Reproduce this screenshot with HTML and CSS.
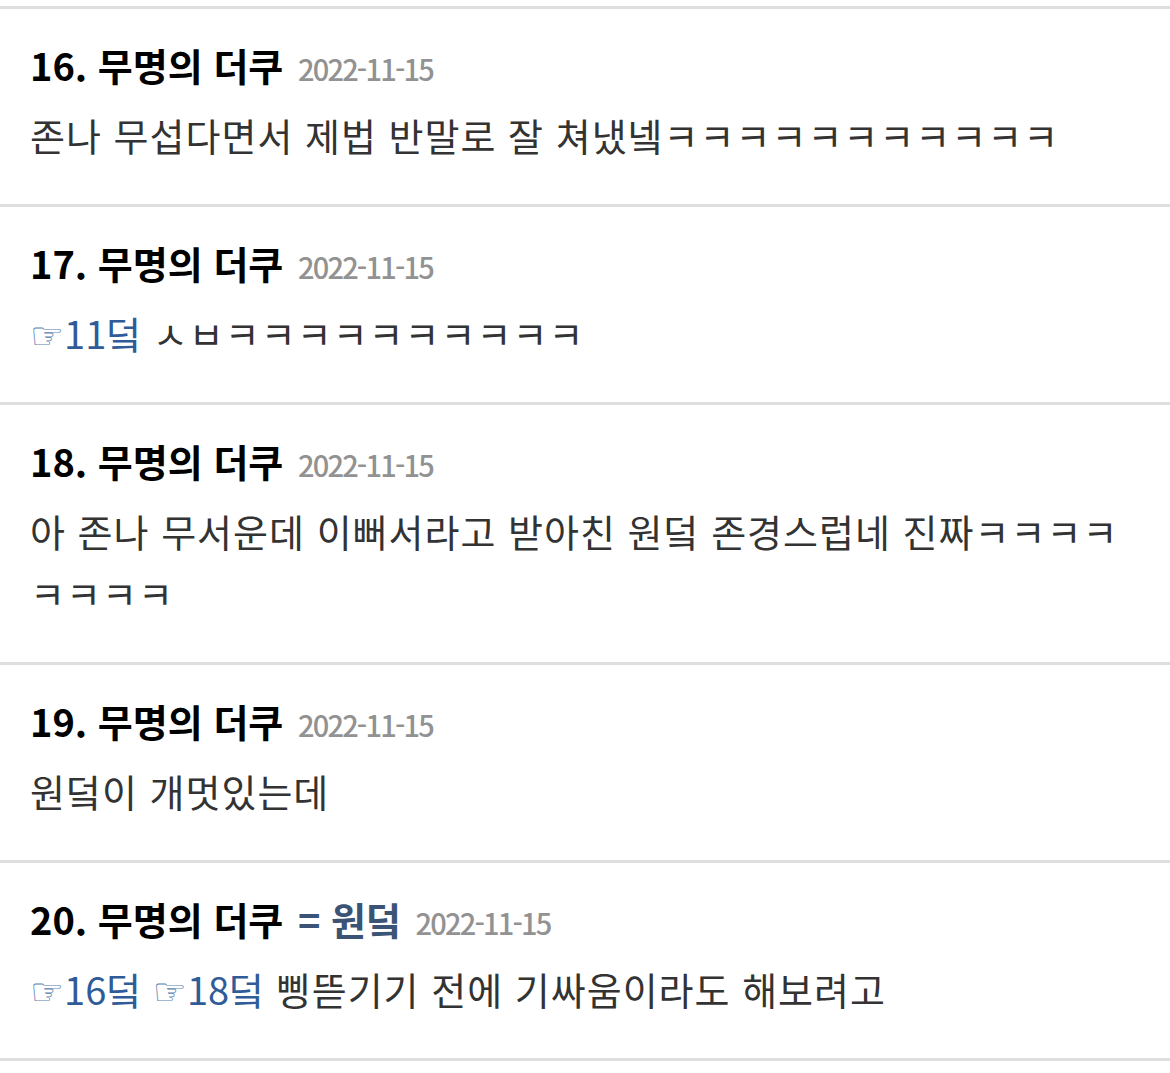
FILE: index.html
```html
<!DOCTYPE html>
<html lang="ko">
<head>
    <meta charset="UTF-8">
    <title>댓글</title>
    <link rel="stylesheet" href="styles.css">
</head>
<body>
    <ul class="comments">
        <li class="comment">
            <div class="comment-head">
                <span class="num">16. 무명의 더쿠</span>
                <span class="date">2022-11-15</span>
            </div>
            <p class="comment-body">존나 무섭다면서 제법 반말로 잘 쳐냈넼ㅋㅋㅋㅋㅋㅋㅋㅋㅋㅋㅋ</p>
        </li>
        <li class="comment">
            <div class="comment-head">
                <span class="num">17. 무명의 더쿠</span>
                <span class="date">2022-11-15</span>
            </div>
            <p class="comment-body"><a class="reply" href="#"><span class="hand">☞</span>11덬</a> ㅅㅂㅋㅋㅋㅋㅋㅋㅋㅋㅋㅋ</p>
        </li>
        <li class="comment">
            <div class="comment-head">
                <span class="num">18. 무명의 더쿠</span>
                <span class="date">2022-11-15</span>
            </div>
            <p class="comment-body">아 존나 무서운데 이뻐서라고 받아친 원덬 존경스럽네 진짜ㅋㅋㅋㅋㅋㅋㅋㅋ</p>
        </li>
        <li class="comment">
            <div class="comment-head">
                <span class="num">19. 무명의 더쿠</span>
                <span class="date">2022-11-15</span>
            </div>
            <p class="comment-body">원덬이 개멋있는데</p>
        </li>
        <li class="comment">
            <div class="comment-head">
                <span class="num">20. 무명의 더쿠</span>
                <span class="op">= 원덬</span>
                <span class="date">2022-11-15</span>
            </div>
            <p class="comment-body"><a class="reply" href="#"><span class="hand">☞</span>16덬</a> <a class="reply" href="#"><span class="hand">☞</span>18덬</a> 삥뜯기기 전에 기싸움이라도 해보려고</p>
        </li>
    </ul>
</body>
</html>
```

FILE: styles.css
```css
body {
    margin: 0;
    padding: 0;
    background-color: #fff;
    font-family: "Noto Sans CJK KR", "Noto Sans", sans-serif;
}
.comments {
    list-style: none;
    margin: 0;
    padding: 0;
    border-top: 3px solid #dedede;
    margin-top: 6px;
}
.comment {
    padding: 31px 30px 38px 30px;
    border-bottom: 3px solid #dedede;
}
.comment-head {
    font-size: 38px;
    line-height: 50px;
    font-weight: bold;
    color: #000;
}
.op {
    color: #3b5476;
    margin-left: 4px;
}
.date {
    font-size: 29px;
    line-height: 1;
    font-weight: 500;
    color: #929292;
    margin-left: 4px;
    letter-spacing: -1.8px;
}
.comment-body {
    margin: 14px 0 0 0;
    font-size: 38px;
    line-height: 62px;
    color: #333;
    letter-spacing: 1px;
}
.reply {
    color: #2f5c98;
    text-decoration: none;
    letter-spacing: 0;
}
.hand {
    font-family: "DejaVu Sans", sans-serif;
    font-size: 38px;
    line-height: 0;
    color: #5a7fb0;
}
```
